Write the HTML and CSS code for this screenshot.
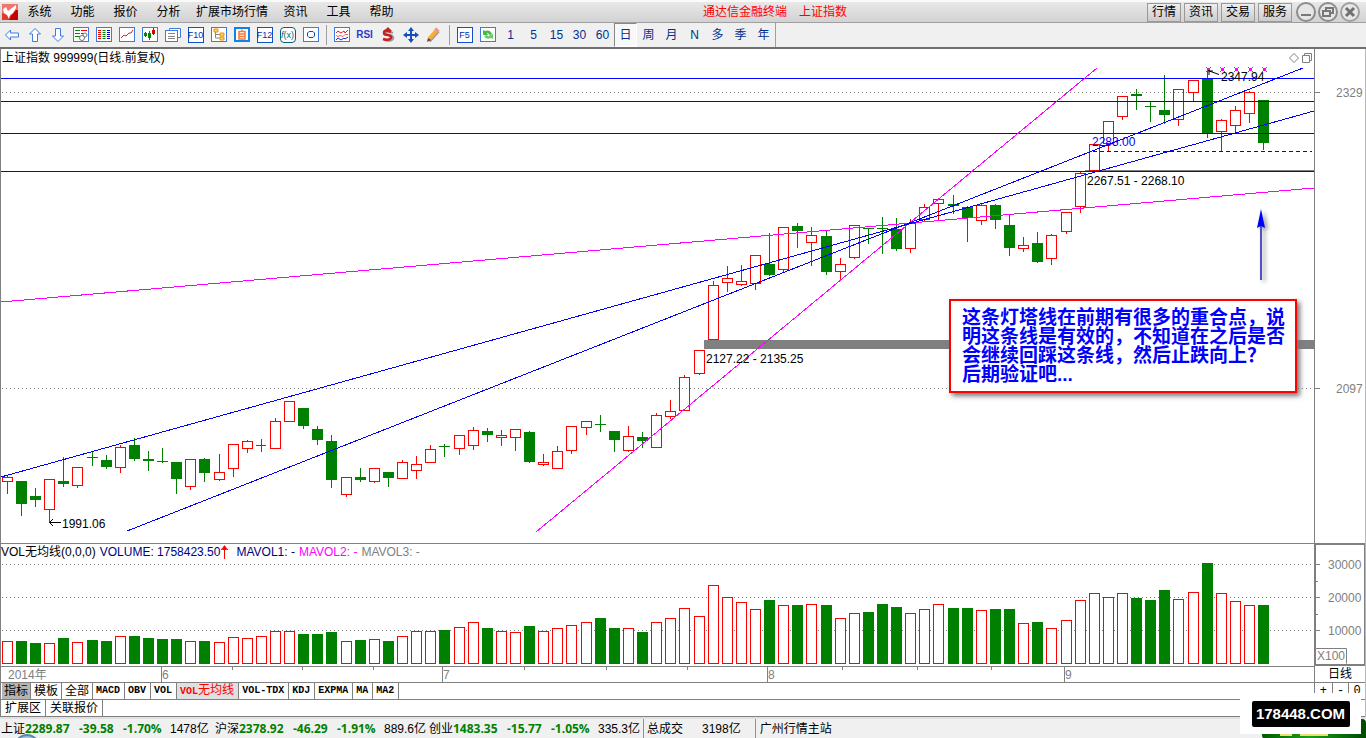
FILE: index.html
```html
<!DOCTYPE html>
<html lang="zh-CN">
<head>
<meta charset="utf-8">
<title>通达信金融终端</title>
<link rel="stylesheet" href="styles.css">
</head>
<body>
<header class="menubar">
  <svg class="logo" width="16" height="16" viewBox="0 0 16 16"><rect width="16" height="16" fill="#e03a30"/><path d="M0 0h16v6L8 12 0 9z" fill="#ef766c"/><path d="M1 5l3-2 2 4 8-6v3l-3 5-3 2-1 4-2-4-3-2z" fill="#fff"/><path d="M9 12l5-6h2v10H7z" fill="#c80000"/></svg>
  <nav class="menu">
    <button>系统</button><button>功能</button><button>报价</button><button>分析</button><button>扩展市场行情</button><button>资讯</button><button>工具</button><button>帮助</button>
  </nav>
  <h1 class="title"><span>通达信金融终端</span><span>上证指数</span></h1>
  <div class="quick"><button>行情</button><button>资讯</button><button>交易</button><button>服务</button></div>
  <div class="win">
    <button aria-label="最小化"><svg width="20" height="20" viewBox="0 0 20 20"><circle cx="10" cy="10" r="9" fill="#e6e6e6" stroke="#8c8c8c" stroke-width="2"/><path d="M5 13h10" stroke="#777" stroke-width="2"/></svg></button>
    <button aria-label="还原"><svg width="20" height="20" viewBox="0 0 20 20"><circle cx="10" cy="10" r="9" fill="#e6e6e6" stroke="#8c8c8c" stroke-width="2"/><path d="M8 8V6h7v5h-3M5 9h7v5H5z" fill="none" stroke="#777" stroke-width="2"/></svg></button>
    <button aria-label="关闭"><svg width="20" height="20" viewBox="0 0 20 20"><circle cx="10" cy="10" r="9" fill="#e6e6e6" stroke="#a0a0a0" stroke-width="2"/><path d="M6 6l8 8M14 6l-8 8" stroke="#707070" stroke-width="3"/></svg></button>
  </div>
</header>

<div class="toolbar">
  <button aria-label="后退"><svg class="ic" viewBox="0 0 16 16"><path d="M1.500 8l5-5v3h8v4h-8v3z" fill="#fff" stroke="#3d7be0"/></svg></button>
  <button aria-label="上"><svg class="ic" viewBox="0 0 16 16"><path d="M8 1.500l5.500 5.500h-3v7.500h-5V7h-3z" fill="#fff" stroke="#3d7be0"/></svg></button>
  <button aria-label="下"><svg class="ic" viewBox="0 0 16 16"><path d="M8 14.500L2.500 9h3V1.500h5V9h3z" fill="#fff" stroke="#3d7be0"/></svg></button>
  <button aria-label="报价"><svg class="ic" viewBox="0 0 16 16"><rect class="fr" x=".5" y=".5" width="15" height="14"/><path d="M2 3.500h5M2 6.500h5M2 9.500h5" stroke="#080"/><path d="M8 3.500h6M8 6.500h3" stroke="#e00"/><circle cx="9" cy="11" r="2.500" fill="#fff" stroke="#777"/><circle cx="12" cy="8" r="2" fill="#fff" stroke="#777"/></svg></button>
  <button aria-label="列表"><svg class="ic" viewBox="0 0 16 16"><rect class="fr" x=".5" y=".5" width="15" height="14"/><g stroke="#e00"><path d="M2 3.500h3M2 5.500h3M2 7.500h3M2 9.500h3M2 11.500h3"/></g><g stroke="#080"><path d="M6.500 3.500h3M6.500 5.500h3M6.500 7.500h3M6.500 9.500h3M6.500 11.500h3"/></g><g stroke="#00d"><path d="M11 3.500h3M11 5.500h3M11 7.500h3M11 9.500h3M11 11.500h3"/></g></svg></button>
  <button aria-label="分时"><svg class="ic" viewBox="0 0 16 16"><rect class="fr" x=".5" y=".5" width="15" height="14"/><path d="M2 11l3-3 2 1 3-3h2l2-3" fill="none" stroke="#d22"/></svg></button>
  <button aria-label="K线"><svg class="ic" viewBox="0 0 16 16"><rect class="fr" x=".5" y=".5" width="15" height="14"/><path d="M3.500 5v5M7.500 4v9" stroke="#080"/><path d="M11.500 1v7" stroke="#d00"/><path d="M2 6h3v3H2zM6 6h3v5H6z" fill="#080"/><path d="M10 3h3v4h-3z" fill="#d00"/></svg></button>
  <button aria-label="窗口"><svg class="ic" viewBox="0 0 16 16"><path d="M4.500 3V1.500h11v9H13" fill="#fff" stroke="#3d7be0"/><rect class="fr" x=".5" y="3.500" width="12" height="11"/><path d="M3 6.500h7M3 9.500h7M3 11.500h7" stroke="#888"/></svg></button>
  <button class="key"><span>F10</span></button>
  <button aria-label="树"><svg class="ic" viewBox="0 0 16 16"><rect class="fr" x=".5" y=".5" width="15" height="14"/><path d="M4.500 4v7H10M5 7.500h5" fill="none" stroke="#888"/><path d="M3 2h4v3H3zM9 6h4v3H9zM9 10h4v3H9z" fill="#fc6" stroke="#e90"/></svg></button>
  <button aria-label="自选"><svg class="ic" viewBox="0 0 16 16"><rect class="fr blue" x="1" y="1" width="14" height="13"/><path d="M5 4.500h6v7.500H5zM8 2.500v2M5 7h6M5 9.500h6" fill="none" stroke="#f27b3a" stroke-width="1.500"/></svg></button>
  <button class="key"><span>F12</span></button>
  <button aria-label="公式" class="fx"><span><i>f</i>(x)</span></button>
  <button aria-label="设置"><svg class="ic" viewBox="0 0 16 16"><rect class="fr" x=".5" y=".5" width="15" height="14"/><path d="M6 4.500h4L11.500 6v3L10 10.500H6L4.500 9V6z" fill="none" stroke="#0a4fb0"/></svg></button>
  <i class="sep"></i>
  <button aria-label="叠加"><svg class="ic" viewBox="0 0 16 16"><rect class="fr" x=".5" y=".5" width="15" height="14"/><path d="M2 6l2-2 3 2 3-2 1 2 3-3" fill="none" stroke="#d22"/><path d="M2 8.500l2 1 2-1 3 1 2-2h3" fill="none" stroke="#e66"/><path d="M2 13l2-2 3 2 3-2 1 1 3-2" fill="none" stroke="#22c"/></svg></button>
  <button class="rsi">RSI</button>
  <button aria-label="除权"><svg class="ic" viewBox="0 0 16 16"><path d="M13 6Q6 3 6 6q0 2 4 2 4 1 3 4-2 3-8 1" fill="none" stroke="#999" stroke-width="2"/><path d="M8 0L4 4h8z" fill="#c22"/><path d="M11 5Q4 2 4 6q0 2 4 2 4 1 3 3-2 3-8 1" fill="none" stroke="#c82020" stroke-width="2.500"/></svg></button>
  <button aria-label="移动"><svg class="ic" viewBox="0 0 16 16"><path d="M8 0l3 4H9v3h3V5l4 3-4 3V9H9v3h2l-3 4-3-4h2V9H4v2L0 8l4-3v2h3V4H5z" fill="#1450b8"/></svg></button>
  <button aria-label="画线"><svg class="ic" viewBox="0 0 16 16"><path d="M3 14l9-10" stroke="#999" stroke-width="4"/><path d="M3 12l8-9" stroke="#fa3" stroke-width="4"/><path d="M10 4l2-2" stroke="#e99" stroke-width="5"/><path d="M1 15l1-4 3 2z" fill="#643"/></svg></button>
  <i class="sep"></i>
  <button class="key"><span>F5</span></button>
  <button aria-label="刷新"><svg class="ic" viewBox="0 0 16 16"><rect class="fr" x=".5" y=".5" width="15" height="14"/><path d="M3 8V3l2 1q5-2 7 3l-3 1Q8 5 7 6l1 2z" fill="#4b4"/><path d="M13 7v5l-2-1q-5 2-7-2l3-1q1 2 3 1L9 8z" fill="#6c6"/></svg></button>
  <button>1</button><button>5</button><button>15</button><button>30</button><button>60</button><button class="on">日</button><button>周</button><button>月</button><button>N</button><button>多</button><button>季</button><button>年</button>
  <i class="sep end"></i>
</div>

<main class="charts">
  <section class="price">
    <div class="price-head"><span>上证指数 999999(日线.前复权)</span>
      <svg width="24" height="12" viewBox="0 0 24 12" fill="none" stroke="#808080"><path d="M5 1.500L9.500 6 5 10.500.500 6z"/><path d="M13.500 3.500h7v7h-7zM15.500 3.500v-2h7v7h-2"/></svg>
    </div>
    <svg class="plot" id="price" viewBox="1 67 1313 476"></svg>
    <aside class="note">这条灯塔线在前期有很多的重合点，说<br>明这条线是有效的，不知道在之后是否<br>会继续回踩这条线，然后止跌向上？<br>后期验证吧...</aside>
  </section>
  <div class="scale"><svg class="plot" viewBox="1315 49 50 494"><path d="M1315 92.500h5M1315 388.500h5" stroke="#808080"/><g class="lab"><text x="1336" y="97">2329</text><text x="1336" y="393">2097</text></g></svg></div>
  <section class="volume">
    <div class="vol-head"><span>VOL无均线(0,0,0)</span><span class="navy now">VOLUME: 1758423.50<svg width="9" height="14" viewBox="0 0 9 14"><path d="M4.500 14V3M1 5l3.500-4L8 5" fill="none" stroke="red" stroke-width="1"/><path d="M4.500 0L7 5H2z" fill="red"/></svg></span><span class="navy">MAVOL1: -</span><span class="magenta">MAVOL2: -</span><span class="grey">MAVOL3: -</span></div>
    <svg class="plot" id="volume" viewBox="1 560 1313 105"></svg>
  </section>
  <div class="scale volscale"><svg class="plot" viewBox="1316 545 48 119"><path d="M1316 564.500h4M1316 597.500h4M1316 630.500h4M1316 581.500h2M1316 614.500h2" stroke="#808080"/><path d="M1315.500 648.500h31v15" fill="none" stroke="#808080"/><g class="lab"><text x="1328" y="569">30000</text><text x="1328" y="602">20000</text><text x="1328" y="635">10000</text><text x="1317" y="660">X100</text></g></svg></div>
  <section class="dates"><svg class="plot" id="dates" viewBox="1 666 1313 15"></svg></section>
  <div class="scale period">日线</div>
  <section class="tabs row-a"><button class="sel cn first">指标</button><button class="cn">模板</button><button class="cn">全部</button><button>MACD</button><button>OBV</button><button>VOL</button><button class="cur">VOL<b>无均线</b></button><button>VOL-TDX</button><button>KDJ</button><button>EXPMA</button><button>MA</button><button>MA2</button></section>
  <div class="scale zoomer"><button>+</button><button>-</button><button>0</button></div>
  <section class="tabs row-b"><button>扩展区</button><button class="link">关联报价</button></section>
</main>

<footer class="status">
  <div class="quote"><span>上证</span><b>2289.87</b><b>-39.58</b><b>-1.70%</b><span>1478亿</span></div>
  <div class="quote"><span>沪深</span><b>2378.92</b><b>-46.29</b><b>-1.91%</b><span>889.6亿</span></div>
  <div class="quote"><span>创业</span><b>1483.35</b><b>-15.77</b><b>-1.05%</b><span>335.3亿</span></div>
  <div class="total"><span>总成交</span><span>3198亿</span></div>
  <div class="host">广州行情主站</div>
  <svg class="orb" width="26" height="5" viewBox="0 0 26 5"><circle cx="13" cy="13" r="12" fill="#9cc4e4" stroke="#6585a5" stroke-width="2"/></svg>
  <div class="badge"><i></i><i></i></div>
  <div class="mark"><span>178448.COM</span></div>
</footer>
<script src="chart.js"></script>
</body>
</html>
```
FILE: styles.css
```css
* { box-sizing: border-box; }
body { margin: 0; background: #fff; color: #000; font: 12px/14px "Liberation Sans", "Noto Sans CJK SC", sans-serif; display: flex; flex-direction: column; min-height: 100vh; overflow: hidden; }
button { font: inherit; color: inherit; border: 0; background: none; padding: 0; margin: 0; }
svg { display: block; }

.menubar { display: flex; align-items: center; height: 23px; padding: 0 6px 0 2px; border-top: 2px solid #fafafa; border-bottom: 1px solid #a0a0a0; background: linear-gradient(#e8e8e8, #d2d2d2); }
.menu { display: flex; }
.menu button { min-width: 43px; padding: 0 6px; }
.title { display: flex; gap: 12px; margin: 0 auto; font: inherit; color: red; }
.quick { display: flex; gap: 3px; }
.quick button { width: 34px; height: 19px; border: 1px solid #999; background: linear-gradient(#eee, #ccc); }
.win { display: flex; gap: 2px; margin-left: 4px; }

.toolbar { display: flex; align-items: stretch; height: 26px; border-bottom: 2px solid #707070; background: #f0f0f0; color: #003090; }
.toolbar button { display: flex; align-items: center; justify-content: center; width: 23px; }
.ic { width: 16px; height: 16px; }
.fr { fill: #fff; stroke: #3d7be0; }
.blue { stroke: #0a84e8; stroke-width: 2; }
.sep { width: 8px; margin: 2px 0; background: linear-gradient(#a0a0a0, #a0a0a0) 4px 0 / 1px 100% no-repeat; }
.end { width: 1px; margin: 0; background: #a0a0a0; }
.key span, .fx span { width: 16px; height: 16px; border: 1px solid #1050c8; background: #fff; font-size: 9px; line-height: 15px; color: #0030b0; display: flex; justify-content: center; }
.key span { font-family: "Liberation Sans Narrow", "Liberation Sans", sans-serif; }
.fx span { border-color: #067; border-radius: 4px; color: #067; }
.toolbar .rsi { font-weight: bold; font-size: 10px; color: #2d3bc8; }
.toolbar .on { border: 1px solid #888; border-right-color: #fff; border-bottom-color: #fff; background: #f8f8f8; }

.charts { display: grid; grid-template-columns: 1fr 51px; border-left: 1px solid #808080; border-right: 1px solid #b8b8b8; }
.plot { width: 100%; height: auto; }
.scale { border-left: 1px solid #808080; }
.price { position: relative; }
.price-head { display: flex; justify-content: space-between; align-items: center; height: 18px; padding: 0 1px; }
.note { position: absolute; right: 17px; top: 250px; padding: 7px 10px 7px 11px; border: 2px solid red; background: #fff; box-shadow: 3px 3px 5px #777; color: #00f; font-weight: bold; font-size: 19px; line-height: 19px; white-space: nowrap; }
.volume { border-top: 1px solid #808080; }
.vol-head { display: flex; align-items: center; gap: 4px; height: 16px; white-space: nowrap; }
.vol-head span { display: flex; align-items: center; }
.now { padding-right: 3px; }
.navy { color: #000080; }
.magenta { color: #f0f; }
.grey { color: #808080; }
.volscale { border: 2px solid #808080; border-right-width: 1px; }
.volscale .plot { height: 119px; }
.dates { border-top: 1px solid #808080; border-bottom: 1px solid #808080; }
.period { border-bottom: 1px solid #808080; text-align: center; line-height: 16px; }
.plot text { font: 12px "Liberation Sans", "Noto Sans CJK SC", sans-serif; }
.lab text { fill: #808080; }

.tabs { display: flex; height: 17px; border-bottom: 1px solid #808080; padding-left: 1px; }
.tabs button { border-right: 1px solid #808080; padding: 0 4px 0 3px; font: bold 10px/14px "Liberation Mono", "Noto Sans CJK SC", monospace; white-space: nowrap; }
.tabs .cn, .tabs b, .row-b button { font: 12px/14px "Liberation Sans", "Noto Sans CJK SC", sans-serif; }
.tabs .cn { padding: 0 3px; }
.tabs .first { padding: 0 2px; }
.tabs .sel { background: #b4b4b4; }
.tabs .cur { background: #e0e0e0; color: red; }
.row-b { grid-column: 1 / 3; }
.tabs .link { padding: 0 4px; }
.zoomer { display: grid; grid-template-columns: repeat(3, 1fr); border-bottom: 1px solid #808080; font: 12px/14px "Liberation Mono", monospace; }
.zoomer button + button { border-left: 1px solid #808080; }

.status { position: relative; flex: 1; display: flex; align-items: center; border-top: 2px solid #e0e0e0; background: #f0f0f0; padding-left: 1px; white-space: nowrap; }
.quote { display: grid; grid-template-columns: 24px 54px 44px 47px 45px; }
.quote b { color: #008000; font: bold 12px/14px "Open Sans", sans-serif; }
.total { display: flex; gap: 19px; border-left: 1px solid #909090; padding: 3px 14px 3px 3px; }
.host { border-left: 1px solid #909090; padding: 3px 4px; }
.orb { position: absolute; left: 14px; bottom: 0; }
.badge { position: absolute; right: 0; bottom: 0; width: 104px; height: 20px; border-radius: 6px 4px 0 4px; background: linear-gradient(90deg, #005a00, #19a019 45%, #004800); display: flex; align-items: flex-end; gap: 8px; padding: 0 18px 3px; }
.badge i { width: 12px; height: 3px; background: #e8e070; }
.badge i + i { width: 28px; }
.mark { position: absolute; right: 5px; bottom: 5px; width: 121px; height: 41px; background: #fff; display: flex; align-items: center; justify-content: center; }
.mark span { width: 98px; height: 26px; border-radius: 2px; background: #000; color: #fff; font: bold 15px/26px "Liberation Sans", sans-serif; text-align: center; }
```
FILE: chart.js
```js
// Daily candles: colour, high, body top, body bottom, low, volume top
const days = `r 476 477 481 494 641|g 481 481 504 516 641|g 488 496 500 507 643|r 479 479 509 522 643|g 457 481 484 487 638|r 467 467 485 488 642|g 452 457 458 466 640|g 455 460 467 469 641|r 445 447 467 473 636|g 438 445 459 461 636|g 451 459 461 471 638|g 448 461 462 463 639|g 462 462 479 494 639|r 459 459 486 490 641|g 458 459 473 482 641|r 454 472 479 481 642|r 444 444 468 477 637|r 440 441 448 453 638|r 439 445 445 452 636|r 418 421 448 448 631|r 401 401 421 421 631|g 408 408 426 429 634|g 426 429 440 445 634|g 435 441 480 488 632|r 477 477 494 497 641|g 468 477 480 482 640|r 468 468 481 483 639|g 472 472 478 487 641|r 460 462 478 478 636|r 456 464 470 479 631|r 445 449 462 462 631|g 444 446 447 457 630|r 435 435 448 455 627|r 427 430 445 450 622|g 428 431 435 442 628|r 430 435 437 446 631|r 429 429 437 451 632|g 431 432 462 463 626|r 454 462 464 466 631|r 446 451 468 468 628|r 426 426 450 454 625|r 421 421 427 435 622|g 415 424 425 432 618|g 431 431 440 452 628|r 426 436 450 452 628|g 432 437 441 448 632|r 413 415 447 447 622|r 400 411 416 419 618|r 375 377 410 411 608|r 350 350 373 375 616|r 281 285 339 339 585|r 266 278 282 292 597|r 265 281 284 286 602|r 255 255 283 290 609|g 233 264 275 276 600|r 227 227 269 272 605|g 223 226 231 248 605|r 227 235 242 266 604|g 231 236 272 275 605|r 258 264 271 280 618|r 225 225 257 259 613|g 228 228 229 244 612|g 217 228 229 254 604|g 218 229 249 251 607|r 219 223 248 253 613|r 204 207 219 221 609|r 199 199 203 221 604|g 195 204 206 214 608|g 206 207 218 242 608|r 204 205 220 225 610|g 204 205 220 229 609|g 215 225 248 256 609|r 237 245 248 252 623|g 232 243 262 263 622|r 234 235 258 265 628|r 212 212 231 234 620|r 172 173 206 213 600|r 144 144 170 170 593|r 121 121 143 151 597|r 96 96 116 120 593|g 89 94 96 110 598|g 102 106 107 122 600|g 75 110 115 124 590|r 89 89 119 126 599|r 80 80 92 101 592|g 71 78 134 138 563|r 119 120 131 151 593|r 106 110 125 132 601|r 91 92 113 123 605|g 100 100 143 150 605`
  .split('|').map(s => s.split(' '));

const line = (x1, y1, x2, y2, c, extra = '') => `<line x1="${x1}" y1="${y1}" x2="${x2}" y2="${y2}" stroke="${c}" ${extra}/>`;
const text = (x, y, s, c) => `<text x="${x}" y="${y}" fill="${c}">${s}</text>`;
const dots = y => line(2, y + .5, 1314, y + .5, '#808080', 'stroke-dasharray="1 3"');
const crisp = s => `<g shape-rendering="crispEdges">${s}</g>`;
const box = (x, top, bottom) => top === bottom
  ? line(x - 5, top + .5, x + 5, top + .5, 'red')
  : `<rect x="${x - 4.5}" y="${top + .5}" width="10" height="${bottom - top}" fill="none" stroke="red"/>`;
const bar = (x, top, bottom) => `<rect x="${x - 5}" y="${top}" width="11" height="${bottom - top}" fill="#008000"/>`;

let candles = '', volumes = '';
days.forEach(([c, ...v], i) => {
  const [high, top, bottom, low, vol] = v.map(Number);
  const x = Math.floor(7.33 + 14.116 * i);
  const red = c === 'r';
  const color = red ? 'red' : '#008000';
  if (high < top) candles += line(x + .5, high, x + .5, top, color);
  if (low > bottom) candles += line(x + .5, bottom, x + .5, low, color);
  candles += red ? box(x, top, bottom) : bar(x, top, bottom);
  volumes += red ? `<rect x="${x - 4.5}" y="${vol + .5}" width="10" height="${663 - vol}" fill="#fff" stroke="red"/>` : bar(x, vol, 664);
});

let marks = '';
[1208, 1222, 1236, 1250, 1264].forEach(x => {
  marks += `<path d="M${x - 2} 67l5 5M${x + 3} 67l-5 5" stroke="#f0f"/><rect x="${x - 1}" y="68" width="3" height="3" fill="#f0f"/>`;
});

document.getElementById('price').innerHTML =
  crisp(dots(92) + dots(388) +
    '<rect x="704" y="340" width="610" height="9" fill="#808080"/>' +
    line(1085, 170.5, 1314, 170.5, '#808080') + candles +
    [78, 101, 133, 171].map(y => line(1, y + .5, 1314, y + .5, '#00f')).join('') +
    line(1093, 151.5, 1312, 151.5, '#00f', 'stroke-dasharray="4 3"') +
    line(1, 302, 1314, 188, '#f0f') + line(536, 532, 1097, 68, '#f0f') +
    line(1, 477, 1314, 111, '#00f') + line(127, 531, 1303, 68, '#00f')) +
  marks +
  '<path d="M61 522.500H49.500M53 519l-3.500 3.500 3.500 3.500M1219 74.500l-11-4M1209 75v-4h4" fill="none" stroke="#000"/>' +
  text(62, 528, '1991.06', '#000') + text(706, 363, '2127.22 - 2135.25', '#000') +
  text(1087, 185, '2267.51 - 2268.10', '#000') + text(1221, 81, '2347.94', '#000') +
  text(1092, 146, '2283.00', '#00f') +
  '<g style="filter:drop-shadow(3px 2px 2px #999)"><path d="M1261 225v55" stroke="#5050c0" stroke-width="2"/><path d="M1261 209l4 19-4-2-4 2z" fill="#00f"/></g>';

document.getElementById('volume').innerHTML = crisp(dots(564) + dots(597) + dots(630) + volumes);

const months = [[162, '6'], [443, '7'], [768, '8'], [1065, '9']];
document.getElementById('dates').innerHTML =
  crisp(months.map(([x]) => line(x - .5, 666, x - .5, 681, '#808080')).join('') +
    [232, 302, 373, 524, 606, 687, 842, 917, 991].map(x => line(x + .5, 666, x + .5, 669, '#808080')).join('')) +
  text(8, 678, '2014年', '#808080') + months.map(([x, s]) => text(x, 678, s, '#808080')).join('');
```
